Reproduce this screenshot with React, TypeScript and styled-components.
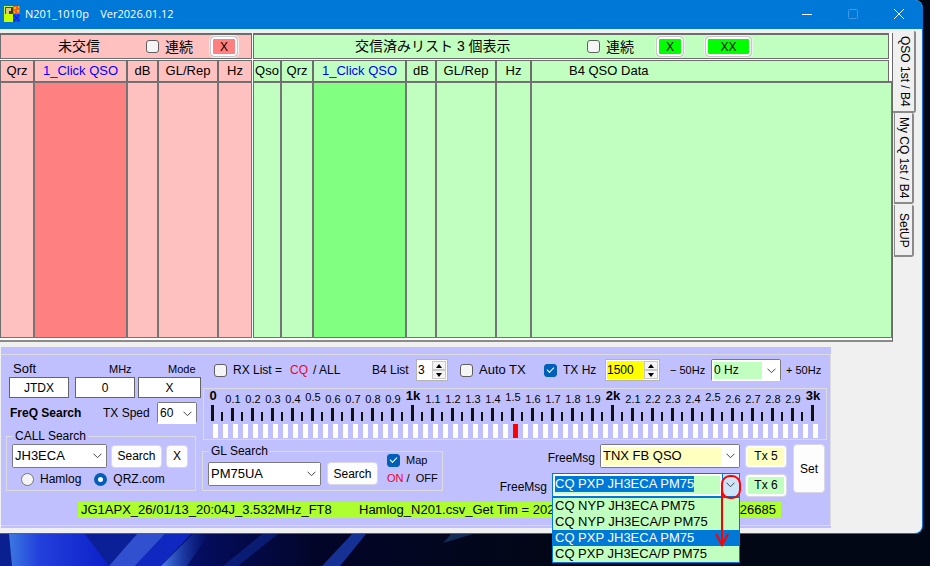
import React, { useState } from "react";
import styled, { createGlobalStyle, css } from "styled-components";

const GlobalStyle = createGlobalStyle`
  *, *::before, *::after { box-sizing: border-box; }
  html, body { margin: 0; padding: 0; }
  body {
    background: #020716;
    color: #000;
    font: 13px/16px "Liberation Sans", "Noto Sans CJK JP", sans-serif;
    overflow: hidden;
  }
  button, input, select { font: inherit; color: inherit; margin: 0; }
`;

const Desktop = styled.div`
  position: relative;
  min-height: 100vh;
  padding-right: 7px;
`;

const Wallpaper = styled.svg`
  position: absolute;
  left: 0;
  bottom: 0;
  width: 100%;
  height: 46px;
`;

const AppWindow = styled.main`
  position: relative;
  padding-bottom: 5px;
  background: #f0f0f0;
  border: solid #0078d7;
  border-width: 0 1px 1px 0;
  border-radius: 0 8px 8px 0;
`;

const TitleBar = styled.header`
  display: flex;
  align-items: center;
  height: 29px;
  padding: 0 8px 2px 4px;
  background: #0078d7;
  border-top-right-radius: 7px;
  color: #fff;
`;

const Title = styled.h1`
  margin: 0 auto 0 5px;
  font: 11px/16px "Open Sans", sans-serif;
  white-space: pre;
`;

const CaptionButton = styled.button`
  display: flex;
  justify-content: center;
  width: 46px;
  height: 24px;
  align-items: center;
  padding: 0;
  border: 0;
  background: none;

  &:last-child { width: 30px; margin-left: 8px; }
`;

const Workspace = styled.div`
  display: flex;
  padding: 4px 5px 0 0;
`;

const Lists = styled.section`
  display: grid;
  grid-template-columns: 252px 1fr;
  column-gap: 1px;
  flex: 1;
  background: #fff;
  border-right: 1px solid #696969;
  border-bottom: 2px solid #8a8a88;
  height: 309px;
  padding-bottom: 2px;
`;

const ListPane = styled.section`
  display: flex;
  flex-direction: column;
  gap: 1px;
  min-width: 0;
`;

const Banner = styled.div<{ $tone: string; $inset?: number }>`
  display: flex;
  align-items: center;
  height: 26px;
  margin-right: ${(p) => p.$inset ?? 0}px;
  border: 1px solid #6d6d6d;
  border-top-width: 2px;
  background: ${(p) => p.$tone};
  font-size: 14px;
`;

const BannerTitle = styled.h2<{ $left: number; $width: number }>`
  width: ${(p) => p.$width}px;
  margin: 0 0 2px ${(p) => p.$left}px;
  font-size: 14px;
  font-weight: 400;
  white-space: nowrap;
`;

const Grid = styled.table<{ $tone: string }>`
  flex: 1;
  width: 100%;
  table-layout: fixed;
  border-collapse: separate;
  border-spacing: 0;
  background: ${(p) => p.$tone};
  border-left: 1px solid #6d6d6d;
`;

const HeadCell = styled.th<{ $link?: boolean; $pad?: number }>`
  height: 22px;
  padding: 0 0 0 ${(p) => p.$pad ?? 0}px;
  border: solid #6d6d6d;
  border-width: 1px 2px 1px 0;
  font-weight: 400;
  text-align: ${(p) => (p.$pad ? "left" : "center")};
  color: ${(p) => (p.$link ? "#0000ff" : "#000")};
  white-space: nowrap;

  &:last-of-type { border-right-width: 1px; }
`;

const HeadFiller = styled.td`
  padding: 0;
  background: #fff;
  border-bottom: 1px solid #6d6d6d;
`;

const BodyCell = styled.td<{ $fill?: string }>`
  padding: 0;
  border: solid #757575;
  border-width: 1px 2px 1px 0;
  background: ${(p) => p.$fill ?? "transparent"};

  &:last-child { border-right-width: 1px; }
`;

const FlatButton = styled.button<{ $fill: string; $width: number }>`
  width: ${(p) => p.$width}px;
  height: 21px;
  padding: 0;
  border: 1px solid #c8c8c8;
  border-radius: 4px;
  background: ${(p) => p.$fill};
  box-shadow: inset 0 0 0 2px #fdfdfd;
  outline: 1px solid #f0f0f0;
  font-size: 12px;
`;

const CheckLabel = styled.label`
  display: inline-flex;
  align-items: center;
  gap: 6px;
  white-space: nowrap;
`;

const CheckBox = styled.input`
  appearance: none;
  display: grid;
  place-items: center;
  flex: none;
  width: 13px;
  height: 13px;
  border: 1px solid #5f5f5f;
  border-radius: 3px;
  background: #f5f5f5;

  &:checked { border-color: #005fb8; background: #005fb8; }
  &:checked::after {
    content: "";
    width: 7px;
    height: 4px;
    margin-top: -2px;
    border: solid #fff;
    border-width: 0 0 1px 1px;
    transform: rotate(-45deg);
  }
`;

const RadioDot = styled.input`
  appearance: none;
  width: 13px;
  height: 13px;
  border: 1px solid #777;
  border-radius: 50%;
  background: #f5f5f5;

  &:checked { border: 4px solid #005fb8; background: #fff; }
`;

const TabStrip = styled.nav`
  display: flex;
  flex-direction: column;
  align-items: flex-start;
  width: 24px;
  margin-top: -2px;
`;

const Tab = styled.button<{ $length: number; $active?: boolean }>`
  display: flex;
  align-items: center;
  justify-content: ${(p) => (p.$length < 60 ? "center" : "flex-start")};
  writing-mode: vertical-rl;
  width: ${(p) => (p.$active ? 23 : 20)}px;
  height: ${(p) => p.$length}px;
  margin: 0 0 ${(p) => (p.$active ? 0 : 1)}px ${(p) => (p.$active ? 0 : 1)}px;
  padding: ${(p) => (p.$active ? "5px 0 0 3px" : p.$length < 60 ? "0" : "4px 0 0")};
  border: solid #8a8a8a;
  border-width: ${(p) => (p.$active ? "0 2px 2px 0" : "0 2px 2px 1px")};
  border-radius: 0 2px 3px 0;
  background: #f0f0f0;
  font-size: 12px;
  line-height: 16px;
`;

const Panel = styled.section`
  margin: 5px 91px 0 1px;
  padding: 7px 0 2px;
  background: #c0c0ff;
`;

const PanelFrame = styled.div`
  border: solid #dcdcdc;
  border-width: 1px 1px 1px 0;
`;

const PanelColumns = styled.div`
  display: grid;
  grid-template-columns: 201px 1fr;
  height: 147px;
`;

const LeftColumn = styled.div`
  padding: 6px 0 0 5px;
`;

const FieldRow = styled.div`
  display: grid;
  grid-template-columns: 60px 60px 63px;
  column-gap: 6px;
  padding-left: 3px;

  & > :nth-child(3) { margin-left: -3px; width: 63px; }
`;

const Field = styled.label<{ $small?: boolean }>`
  display: flex;
  flex-direction: column;
  line-height: 16px;
  font-size: ${(p) => (p.$small ? 11 : 13)}px;
`;

const FieldName = styled.span<{ $indent: number }>`
  padding-left: ${(p) => p.$indent}px;
`;

const TextBox = styled.input`
  width: 100%;
  height: 21px;
  padding: 0;
  border: 1px solid #646464;
  background: #fff;
  font-size: 12px;
  text-align: center;
`;

const SpeedRow = styled.div`
  display: flex;
  align-items: center;
  height: 21px;
  margin: 4px 0 0 4px;
  font-size: 12px;
`;

const Bold = styled.span`
  width: 93px;
  font-weight: 700;
`;

const SpeedLabel = styled.label`
  width: 54px;
`;

const groupLine = css`
  border: 1px solid #dcdcdc;
`;

const Group = styled.fieldset`
  ${groupLine}
  min-width: 0;
  margin: 0;
  padding: 0 5px;
`;

const Legend = styled.legend`
  margin-left: 1px;
  padding: 0 2px;
  font-size: 12px;
  line-height: 14px;
`;

const CallGroup = styled(Group)`
  width: 190px;
  height: 62px;
  margin-top: 6px;
`;

const Row = styled.div<{ $gap?: number }>`
  display: flex;
  align-items: center;
  gap: ${(p) => p.$gap ?? 0}px;
`;

const CallRow = styled(Row)`
  padding-top: 1px;
`;

const RadioRow = styled(Row)`
  padding: 3px 0 0 9px;
`;

const RadioLabel = styled.label`
  display: inline-flex;
  align-items: center;
  gap: 6px;
  font-size: 12px;
`;

const PushButton = styled.button<{ $width: number; $height?: number; $fill?: string }>`
  flex: none;
  width: ${(p) => p.$width}px;
  height: ${(p) => p.$height ?? 23}px;
  padding: 0;
  border: 1px solid #d8d8e4;
  border-radius: 4px;
  background: ${(p) => p.$fill ?? "#fdfdfd"};
  box-shadow: inset 0 0 0 2px #fdfdfd;
  font-size: 12px;
`;

const SelectFrame = styled.div<{ $width: number; $height: number }>`
  display: grid;
  flex: none;
  width: ${(p) => p.$width}px;
  height: ${(p) => p.$height}px;
  border: 1px solid #7a7a7a;
  border-radius: 2px;
  background: #fff;

  & > * { grid-area: 1 / 1; }
`;

const NativeSelect = styled.select<{ $fill?: string; $small?: boolean }>`
  appearance: none;
  width: 100%;
  min-width: 0;
  padding: 0 16px 1px 0;
  border: 2px solid #fff;
  border-width: 2px 0 2px 2px;
  background: linear-gradient(${(p) => p.$fill ?? "#fff"}, ${(p) => p.$fill ?? "#fff"}) 0 0 /
    calc(100% - 18px) 100% no-repeat #fff;
  font-size: ${(p) => (p.$small ? 12 : 13)}px;
`;

const ChevronSvg = styled.svg`
  place-self: center end;
  margin-right: 4px;
  pointer-events: none;
`;

function Chevron() {
  return (
    <ChevronSvg width="9" height="6" viewBox="0 0 9 6" aria-hidden="true">
      <path d="M.5 .7 4.5 4.7 8.5 .7" fill="none" stroke="#444" />
    </ChevronSvg>
  );
}

type ComboProps = {
  label: string;
  id?: string;
  value: string;
  width: number;
  height?: number;
  fill?: string;
  small?: boolean;
};

function Combo({ label, id, value, width, height = 24, fill, small }: ComboProps) {
  return (
    <SelectFrame $width={width} $height={height}>
      <NativeSelect id={id} aria-label={label} $fill={fill} $small={small}>
        <option>{value}</option>
      </NativeSelect>
      <Chevron />
    </SelectFrame>
  );
}

const SpinFrame = styled.div<{ $width: number }>`
  display: flex;
  flex: none;
  width: ${(p) => p.$width}px;
  height: 22px;
  padding: 1px;
  border: 1px solid #b4b4b4;
  background: #fff;
`;

const SpinInput = styled.input<{ $fill: string }>`
  flex: 1;
  min-width: 0;
  padding: 0;
  border: 0;
  background: ${(p) => p.$fill};
`;

const SpinButtons = styled.div`
  display: grid;
  grid-template-rows: 1fr 1fr;
  width: 14px;
`;

const SpinButton = styled.button`
  display: grid;
  place-items: center;
  padding: 0;
  border: 1px solid #c8c8c8;
  background: #f4f4f4;
`;

function Spinner({ label, value, width, fill = "#fff" }: { label: string; value: string; width: number; fill?: string }) {
  return (
    <SpinFrame $width={width}>
      <SpinInput aria-label={label} defaultValue={value} $fill={fill} />
      <SpinButtons>
        <SpinButton aria-label={`${label} up`}>
          <svg width="6" height="4" viewBox="0 0 6 4"><path d="M0 4 3 0 6 4z" /></svg>
        </SpinButton>
        <SpinButton aria-label={`${label} down`}>
          <svg width="6" height="4" viewBox="0 0 6 4"><path d="M0 0 3 4 6 0z" /></svg>
        </SpinButton>
      </SpinButtons>
    </SpinFrame>
  );
}

const RightColumn = styled.div`
  min-width: 0;
`;

const OptionsRow = styled.div`
  display: flex;
  align-items: center;
  height: 24px;
  margin-top: 3px;
  padding-left: 12px;
  font-size: 12px;
  white-space: nowrap;
`;

const Item = styled.span<{ $width: number; $size?: number }>`
  flex: none;
  display: flex;
  align-items: center;
  width: ${(p) => p.$width}px;
  font-size: ${(p) => p.$size ?? 12}px;
`;

const Red = styled.span`
  color: #f00028;
`;

const Ruler = styled.div`
  ${groupLine}
  width: 624px;
  height: 52px;
  margin: 6px 0 0 1px;
`;

const RulerLabels = styled.div`
  display: flex;
  width: 620px;
  height: 16px;
  margin-left: -1px;
`;

const RulerLabel = styled.span<{ $kind: "major" | "mid" | "minor" }>`
  width: 20px;
  height: 16px;
  font-size: ${(p) => (p.$kind === "major" ? 13 : 11)}px;
  font-weight: ${(p) => (p.$kind === "major" ? 700 : 400)};
  line-height: ${(p) => (p.$kind === "minor" ? 20 : p.$kind === "mid" ? 16 : 14)}px;
  text-align: center;
`;

function FrequencyRuler() {
  const steps = Array.from({ length: 31 }, (_, i) => i);
  const halves = Array.from({ length: 61 }, (_, i) => i);
  return (
    <Ruler>
      <RulerLabels>
        {steps.map((i) => {
          const major = i % 10 === 0;
          const text = major ? (i === 0 ? "0" : `${i / 10}k`) : (i / 10).toFixed(1);
          return (
            <RulerLabel key={i} $kind={major ? "major" : i % 5 === 0 ? "mid" : "minor"}>
              {text}
            </RulerLabel>
          );
        })}
      </RulerLabels>
      <svg width="620" height="34" viewBox="0 0 620 34" display="block" aria-hidden="true">
        {halves.map((i) => {
          const major = i % 20 === 0;
          const top = major ? 0 : i % 2 === 0 ? 3 : 7;
          const thick = i % 2 === 0 ? 3 : 2;
          return (
            <g key={i}>
              <rect x={7 + i * 10} y={top} width={thick} height={16 - top} fill="#111" />
              <rect x={9 + i * 10} y="19" width="5" height="14" fill={i === 30 ? "#ff0000" : "#fff"} />
            </g>
          );
        })}
      </svg>
    </Ruler>
  );
}

const LowerRow = styled.div`
  display: flex;
  justify-content: space-between;
  padding-right: 5px;
`;

const LocatorGroup = styled(Group)`
  width: 241px;
  height: 47px;
  margin-top: 4px;
`;

const LocatorRow = styled(Row)`
  align-items: flex-start;
  height: 24px;
  padding-top: 4px;
`;

const MapColumn = styled.div`
  display: flex;
  flex-direction: column;
  gap: 2px;
  margin: -10px 0 0 9px;
  font-size: 11px;
  line-height: 16px;
  white-space: pre;
`;

const Messages = styled.div`
  display: flex;
  gap: 6px;
  padding-top: 4px;
`;

const MessageStack = styled.div`
  display: flex;
  flex-direction: column;
  gap: 5px;
`;

const MessageRow = styled.div`
  display: flex;
  align-items: center;
  justify-content: flex-end;
  gap: 5px;
  font-size: 12px;

  & > label { padding-top: 3px; }
`;

const OpenCombo = styled.div`
  position: relative;
  display: flex;
  width: 188px;
  height: 24px;
  border: 1px solid #0078d7;
  background: #fff;
  font-size: 13px;
`;

const ComboText = styled.div`
  flex: 1;
  margin: 2px;
  background: #c0ffc0;
`;

const SelectedInput = styled.input`
  display: block;
  field-sizing: content;
  height: 16px;
  padding: 0;
  border: 0;
  background: #0078d7;
  color: #fff;
`;

const DropButton = styled.button`
  display: grid;
  width: 17px;
  padding: 0;
  border: 0;
  border-left: 1px solid #0078d7;
  background: #cce4f7;
`;

const OptionList = styled.ul`
  position: absolute;
  z-index: 2;
  top: 23px;
  left: -1px;
  right: -1px;
  margin: 0;
  padding: 0;
  border: 1px solid #0078d7;
  background: #c0ffc0;
  list-style: none;
`;

const Option = styled.li<{ $selected: boolean }>`
  padding-left: 2px;
  line-height: 16px;
  white-space: nowrap;
  background: ${(p) => (p.$selected ? "#0078d7" : "transparent")};
  color: ${(p) => (p.$selected ? "#fff" : "#000")};
`;

const Marker = styled.svg`
  position: absolute;
  z-index: 3;
  top: 0;
  right: -3px;
  pointer-events: none;
`;

const StatusBar = styled.div`
  display: flex;
  width: 703px;
  height: 16px;
  margin: 0 0 7px 77px;
  padding: 0 5px 0 3px;
  background: #adff2f;
  white-space: nowrap;
`;

const StatusText = styled.span<{ $width?: number }>`
  width: ${(p) => (p.$width ? `${p.$width}px` : "auto")};
  &:last-child { margin-left: auto; }
`;

const PINK = "#ffc0c0";
const GREEN = "#c0ffc0";
const messages = ["CQ NYP JH3ECA PM75", "CQ NYP JH3ECA/P PM75", "CQ PXP JH3ECA PM75", "CQ PXP JH3ECA/P PM75"];

function AppIcon() {
  return (
    <svg width="16" height="16" viewBox="0 0 16 16" aria-hidden="true">
      <path fill="#c8ff00" d="M0 0h9v16H0z" />
      <path fill="#4a3c18" d="M1 1h8v7H1z" />
      <path fill="#d8c890" d="M2 2h5v3H5v3H2z" />
      <path fill="#ff5a1e" d="M9 0h7v8H9z" />
      <path fill="#ffc000" d="M10 1h2v2h-2zM13 4h2v2h-2zM14 0h1v2h-1zM10 5h1v2h-1z" />
      <path fill="#1048ff" d="M9 8h7v8H9z" />
      <path stroke="#0020a0" d="m10 9 5 6m0-6-5 6" />
    </svg>
  );
}

export default function App() {
  const [message, setMessage] = useState(messages[2]);

  return (
    <>
      <GlobalStyle />
      <Desktop>
        <Wallpaper viewBox="0 0 930 46" preserveAspectRatio="none" aria-hidden="true">
          <defs>
            <linearGradient id="sky" x2="1">
              <stop offset="0" stopColor="#0a1f90" />
              <stop offset=".14" stopColor="#0a2098" />
              <stop offset=".22" stopColor="#040c5c" />
              <stop offset=".34" stopColor="#020528" />
              <stop offset=".6" stopColor="#020716" />
            </linearGradient>
            <linearGradient id="petal" x2="1">
              <stop offset="0" stopColor="#3c78e0" />
              <stop offset=".3" stopColor="#2340dc" />
              <stop offset="1" stopColor="#0c20c8" />
            </linearGradient>
            <linearGradient id="ray" x2="1">
              <stop offset="0" stopColor="#4a80e8" />
              <stop offset="1" stopColor="#1030b0" stopOpacity="0" />
            </linearGradient>
          </defs>
          <path fill="url(#sky)" d="M0 0h930v46H0z" />
          <path fill="url(#petal)" d="M9 14h76l24 32H12z" />
          <path fill="#3050d0" d="M109 46 137 14h28l-30 32z" />
          <path fill="#1028c0" d="M135 46 165 14h26l-30 32z" />
          <path fill="url(#ray)" d="M161 46 193 14h16l-22 32z" />
          <path fill="#1030a0" opacity=".5" d="M223 46 262 14h16l-40 32z" />
          <path fill="#1c3cb0" opacity=".8" d="M322 46 352 14h14l-26 32z" />
          <path fill="#122c58" d="m443 23 8-9h22z" />
        </Wallpaper>

        <AppWindow>
          <TitleBar>
            <AppIcon />
            <Title>{"N201_1010p    Ver2026.01.12"}</Title>
            <CaptionButton aria-label="Minimize">
              <svg width="10" height="10"><path d="M0 5.5h10" stroke="#fff" /></svg>
            </CaptionButton>
            <CaptionButton aria-label="Maximize" disabled>
              <svg width="10" height="10"><rect x=".5" y=".5" width="9" height="9" rx="1" fill="none" stroke="#3f9ae4" /></svg>
            </CaptionButton>
            <CaptionButton aria-label="Close">
              <svg width="10" height="10"><path d="m0 0 10 10M10 0 0 10" stroke="#fff" /></svg>
            </CaptionButton>
          </TitleBar>

          <Workspace>
            <Lists>
              <ListPane>
                <Banner $tone={PINK}>
                  <BannerTitle $left={57} $width={88}>未交信</BannerTitle>
                  <CheckLabel><CheckBox type="checkbox" />連続</CheckLabel>
                  <Item $width={17} />
                  <FlatButton $fill="#ff8080" $width={28}>X</FlatButton>
                </Banner>
                <Grid $tone={PINK}>
                  <colgroup>
                    <col width="34" /><col width="93" /><col width="31" /><col width="60" /><col />
                  </colgroup>
                  <thead>
                    <tr>
                      <HeadCell>Qrz</HeadCell>
                      <HeadCell $link>1_Click QSO</HeadCell>
                      <HeadCell>dB</HeadCell>
                      <HeadCell>GL/Rep</HeadCell>
                      <HeadCell>Hz</HeadCell>
                    </tr>
                  </thead>
                  <tbody>
                    <tr>
                      <BodyCell /><BodyCell $fill="#ff8080" /><BodyCell /><BodyCell /><BodyCell />
                    </tr>
                  </tbody>
                </Grid>
              </ListPane>

              <ListPane>
                <Banner $tone={GREEN} $inset={3}>
                  <BannerTitle $left={101} $width={232}>交信済みリスト 3 個表示</BannerTitle>
                  <CheckLabel><CheckBox type="checkbox" />連続</CheckLabel>
                  <Item $width={22} />
                  <FlatButton $fill="#00ff00" $width={28}>X</FlatButton>
                  <Item $width={21} />
                  <FlatButton $fill="#00ff00" $width={47}>XX</FlatButton>
                </Banner>
                <Grid $tone={GREEN}>
                  <colgroup>
                    <col width="28" /><col width="32" /><col width="93" /><col width="30" />
                    <col width="60" /><col width="35" /><col /><col width="3" />
                  </colgroup>
                  <thead>
                    <tr>
                      <HeadCell>Qso</HeadCell>
                      <HeadCell>Qrz</HeadCell>
                      <HeadCell $link>1_Click QSO</HeadCell>
                      <HeadCell>dB</HeadCell>
                      <HeadCell>GL/Rep</HeadCell>
                      <HeadCell>Hz</HeadCell>
                      <HeadCell $pad={37}>B4 QSO Data</HeadCell>
                      <HeadFiller />
                    </tr>
                  </thead>
                  <tbody>
                    <tr>
                      <BodyCell /><BodyCell /><BodyCell $fill="#80ff80" /><BodyCell />
                      <BodyCell /><BodyCell /><BodyCell colSpan={2} />
                    </tr>
                  </tbody>
                </Grid>
              </ListPane>
            </Lists>

            <TabStrip role="tablist">
              <Tab role="tab" aria-selected $length={82} $active>QSO 1st / B4</Tab>
              <Tab role="tab" $length={91}>My CQ 1st / B4</Tab>
              <Tab role="tab" $length={52}>SetUP</Tab>
            </TabStrip>
          </Workspace>

          <Panel>
            <PanelFrame>
              <PanelColumns>
                <LeftColumn>
                  <FieldRow>
                    <Field>
                      <FieldName $indent={4}>Soft</FieldName>
                      <TextBox defaultValue="JTDX" />
                    </Field>
                    <Field $small>
                      <FieldName $indent={34}>MHz</FieldName>
                      <TextBox defaultValue="0" />
                    </Field>
                    <Field $small>
                      <FieldName $indent={30}>Mode</FieldName>
                      <TextBox defaultValue="X" />
                    </Field>
                  </FieldRow>
                  <SpeedRow>
                    <Bold>FreQ Search</Bold>
                    <SpeedLabel htmlFor="speed">TX Sped</SpeedLabel>
                    <Combo id="speed" label="TX Sped" value="60" width={40} height={21} small />
                  </SpeedRow>
                  <CallGroup>
                    <Legend>CALL Search</Legend>
                    <CallRow $gap={4}>
                      <Combo label="Call sign" value="JH3ECA" width={95} />
                      <PushButton $width={51}>Search</PushButton>
                      <PushButton $width={22}>X</PushButton>
                    </CallRow>
                    <RadioRow $gap={13}>
                      <RadioLabel><RadioDot type="radio" name="source" />Hamlog</RadioLabel>
                      <RadioLabel><RadioDot type="radio" name="source" defaultChecked />QRZ.com</RadioLabel>
                    </RadioRow>
                  </CallGroup>
                </LeftColumn>

                <RightColumn>
                  <OptionsRow>
                    <Item $width={76} as="label"><CheckLabel as="span"><CheckBox type="checkbox" />RX List =</CheckLabel></Item>
                    <Item $width={23}><Red>CQ</Red></Item>
                    <Item $width={59}>/ ALL</Item>
                    <Item $width={44}>B4 List</Item>
                    <Spinner label="B4 List" value="3" width={32} />
                    <Item $width={12} />
                    <Item $width={84} $size={13}><CheckLabel><CheckBox type="checkbox" />Auto TX</CheckLabel></Item>
                    <Item $width={61}><CheckLabel><CheckBox type="checkbox" defaultChecked />TX Hz</CheckLabel></Item>
                    <Spinner label="TX Hz" value="1500" width={55} fill="#ffff00" />
                    <Item $width={10} />
                    <Item $width={41} $size={11}>− 50Hz</Item>
                    <Combo label="Offset" value="0 Hz" width={70} height={22} fill={GREEN} small />
                    <Item $width={5} />
                    <Item $width={36} $size={11}>+ 50Hz</Item>
                  </OptionsRow>
                  <FrequencyRuler />
                  <LowerRow>
                    <LocatorGroup>
                      <Legend>GL Search</Legend>
                      <LocatorRow>
                        <Combo label="Grid locator" value="PM75UA" width={113} />
                        <Item $width={6} />
                        <PushButton $width={51}>Search</PushButton>
                        <MapColumn>
                          <CheckLabel><CheckBox type="checkbox" defaultChecked />Map</CheckLabel>
                          <span><Red>ON</Red> /  OFF</span>
                        </MapColumn>
                      </LocatorRow>
                    </LocatorGroup>
                    <Messages>
                      <MessageStack>
                        <MessageRow>
                          <label htmlFor="msg5">FreeMsg</label>
                          <Combo id="msg5" label="FreeMsg" value="TNX FB QSO" width={140} fill="#ffffc0" />
                          <PushButton $width={42} $fill="#ffffc0">Tx 5</PushButton>
                        </MessageRow>
                        <MessageRow>
                          <label htmlFor="msg6">FreeMsg</label>
                          <OpenCombo>
                            <ComboText>
                              <SelectedInput id="msg6" role="combobox" aria-expanded="true" aria-controls="msg6-list" readOnly value={message} />
                            </ComboText>
                            <DropButton aria-label="Open list"><Chevron /></DropButton>
                            <OptionList role="listbox" id="msg6-list">
                              {messages.map((m) => (
                                <Option key={m} role="option" aria-selected={m === message} $selected={m === message} onClick={() => setMessage(m)}>
                                  {m}
                                </Option>
                              ))}
                            </OptionList>
                            <Marker width="32" height="76" viewBox="0 0 32 76" aria-hidden="true">
                              <g fill="none" stroke="#ff0000" strokeWidth="2">
                                <rect x="12" y="2" width="18" height="22" rx="8" />
                                <path d="M12 10v62M6 60l6 11 6-11" />
                              </g>
                            </Marker>
                          </OpenCombo>
                          <PushButton $width={42} $fill={GREEN}>Tx 6</PushButton>
                        </MessageRow>
                      </MessageStack>
                      <PushButton $width={32} $height={49}>Set</PushButton>
                    </Messages>
                  </LowerRow>
                </RightColumn>
              </PanelColumns>
              <StatusBar>
                <StatusText $width={278}>JG1APX_26/01/13_20:04J_3.532MHz_FT8</StatusText>
                <StatusText>Hamlog_N201.csv_Get Tim = 202</StatusText>
                <StatusText>26685</StatusText>
              </StatusBar>
            </PanelFrame>
          </Panel>
        </AppWindow>
      </Desktop>
    </>
  );
}
